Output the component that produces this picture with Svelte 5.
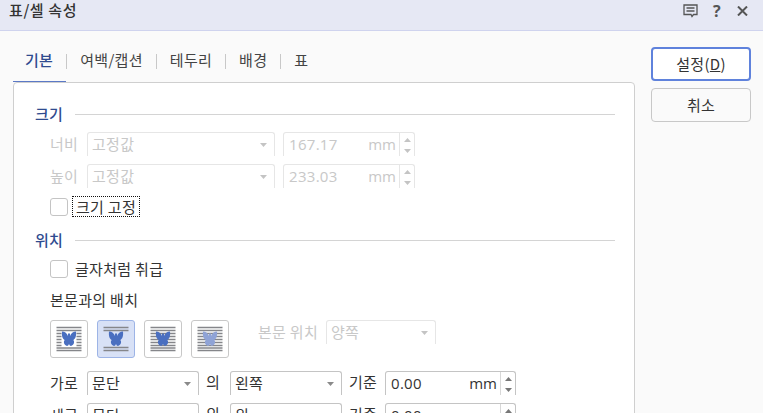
<script>
  const tabs = ['여백/캡션', '테두리', '배경', '표'];
  const wraps = [
    { kind: 'side', fill: '#4a6fc0' },
    { kind: 'topbottom', fill: '#4a6fc0', on: true },
    { kind: 'over', fill: '#4a6fc0' },
    { kind: 'behind', fill: '#8fa3d6' }
  ];
  const linesFor = (k) => {
    if (k === 'topbottom') return [{ y: 4.5, x: 3.5, w: 25 }, { y: 7.5, x: 3.5, w: 25 }, { y: 24.5, x: 3.5, w: 25 }, { y: 27.5, x: 3.5, w: 25 }];
    const ys = [4.5, 7.5, 10.5, 13.5, 16.5, 19.5, 22.5, 25, 27.5];
    if (k === 'side') return ys.map((y, i) => (i < 2 || i > 6) ? [{ y, x: 3.5, w: 25 }] : [{ y, x: 3.5, w: 5 }, { y, x: 23.5, w: 5 }]).flat();
    return ys.map((y) => ({ y, x: 3.5, w: 25 }));
  };
  const wing = 'M6 8.5 C9 8.5 11 10.5 12 13 L12 10.5 L14 10.5 L14 13 C15 10.5 17 8.5 20 8.5 C20.5 12.5 19.5 16 17.3 17 C19 18.8 17.8 22.3 15 23 C14 23 13.5 22 13 21 C12.5 22 12 23 11 23 C8.2 22.3 7 18.8 8.7 17 C6.5 16 5.5 12.5 6 8.5 Z';
</script>

{#snippet select(text, cls = '')}
  <div class="field select {cls}">
    <span class="val">{text}</span>
    <svg class="caret" width="7" height="4" viewBox="0 0 7 4"><path d="M0 0H7L3.5 4Z" /></svg>
  </div>
{/snippet}

{#snippet spin(text, cls = '')}
  <div class="field spin {cls}">
    <span class="num">{text}</span>
    <span class="unit">mm</span>
    <div class="arrows">
      <svg width="7" height="4" viewBox="0 0 7 4"><path d="M0 4H7L3.5 0Z" /></svg>
      <svg width="7" height="4" viewBox="0 0 7 4"><path d="M0 0H7L3.5 4Z" /></svg>
    </div>
  </div>
{/snippet}

<div class="dialog">
  <header class="titlebar">
    <span class="title">표/셀 속성</span>
    <div class="winbtns">
      <svg width="15" height="14" viewBox="0 0 15 14" fill="none" stroke="#555" stroke-width="1.3">
        <path d="M1 1H14V10.5H10.5L9 12.5L8 10.5H1Z" />
        <path d="M3.5 4H11.5M3.5 7H11.5" />
      </svg>
      <span class="q">?</span>
      <svg width="11" height="10" viewBox="0 0 11 10" fill="none" stroke="#555" stroke-width="2">
        <path d="M1 .5L10 9.500M10 .5L1 9.500" />
      </svg>
    </div>
  </header>

  <div class="content">
    <main class="left">
      <nav class="tabs">
        <span class="tab active">기본</span>
        {#each tabs as t}
          <i class="sep"></i>
          <span class="tab">{t}</span>
        {/each}
      </nav>

      <section class="panel">
        <div class="group"><span>크기</span><hr /></div>

        <div class="row r1 dim">
          <span class="lab">너비</span>
          {@render select('고정값', 'w188')}
          {@render spin('167.17', 'w132')}
        </div>
        <div class="row r2 dim">
          <span class="lab">높이</span>
          {@render select('고정값', 'w188')}
          {@render spin('233.03', 'w132')}
        </div>
        <div class="check c1"><i class="box"></i><span class="focus">크기 고정</span></div>

        <div class="group g2"><span>위치</span><hr /></div>
        <div class="check c2"><i class="box"></i><span class="plain">글자처럼 취급</span></div>
        <div class="sub">본문과의 배치</div>

        <div class="wraps">
          {#each wraps as w}
            <div class="wrapbtn" class:on={w.on}>
              <svg width="32" height="32" viewBox="0 0 32 32">
                {#each linesFor(w.kind) as l}
                  <rect x={l.x} y={l.y - 0.75} width={l.w} height="1.5" fill="#85868a" />
                {/each}
                <path d={wing} transform="translate(3 0)" fill={w.fill} />
              </svg>
            </div>
          {/each}
          <div class="pos dim">
            <span class="poslab">본문 위치</span>
            {@render select('양쪽', 'w110')}
          </div>
        </div>

        <div class="row r3">
          <span class="lab">가로</span>
          {@render select('문단', 'w112')}
          <span class="of">의</span>
          {@render select('왼쪽', 'w112')}
          <span class="base">기준</span>
          {@render spin('0.00', 'w131')}
        </div>
        <div class="row r4">
          <span class="lab">세로</span>
          {@render select('문단', 'w112')}
          <span class="of">의</span>
          {@render select('위', 'w112')}
          <span class="base">기준</span>
          {@render spin('0.00', 'w131')}
        </div>
      </section>
    </main>

    <aside class="actions">
      <button class="btn primary">설정(<u>D</u>)</button>
      <button class="btn">취소</button>
    </aside>
  </div>
</div>

<style>
  :global(body) { margin: 0; background: #fafafa; }
  .dialog {
    width: 763px; height: 413px; overflow: hidden; background: #fafafa;
    font-family: "Noto Sans CJK KR", "Open Sans", sans-serif;
    font-size: 15px; color: #333; line-height: 20px; letter-spacing: 0.3px;
  }
  .titlebar {
    height: 31px; box-sizing: border-box; background: #e6e8f4; border-bottom: 1px solid #cfd3ee;
    display: flex; align-items: center; justify-content: space-between; padding: 0 15px 8px 9px;
  }
  .title { font-size: 15px; font-weight: 500; letter-spacing: 0.6px; color: #333; position: relative; top: -1px; }
  .winbtns { display: flex; align-items: center; gap: 15px; }
  .q { font: bold 16px/16px "Open Sans", sans-serif; color: #555; width: 9px; }

  .content { display: flex; padding-left: 13px; gap: 16px; }
  .left { width: 622px; flex: none; }
  .tabs { height: 51px; box-sizing: border-box; display: flex; align-items: center; padding: 9px 0 0 12px; }
  .tab { color: #444; position: relative; top: -1px; }
  .tab.active { color: #2f4b8f; font-weight: 500; }
  .tab.active::after {
    content: ''; position: absolute; left: -12px; right: -13px; top: 31px; height: 1px; background: #5b79c6;
  }
  .sep { width: 1px; height: 15px; background: #c8c8c8; margin: 0 13px; }

  .panel {
    height: 340px; box-sizing: border-box; background: #fff; border: 1px solid #cfcfcf; border-radius: 4px 4px 0 0;
    padding: 21px 19px 0 21px;
  }
  .group { display: flex; align-items: center; gap: 12px; height: 20px; color: #2f4b8f; font-weight: 500; }
  .group hr { flex: 1; border: 0; height: 1px; background: #d4d4d4; margin: 0; }
  .g2 { margin-top: 13px; }

  .row { display: flex; align-items: flex-start; padding-left: 15px; height: 24px; }
  .r1 { margin-top: 8px; }
  .r2 { margin-top: 8px; }
  .r3 { margin-top: 13px; }
  .r4 { margin-top: 8px; }
  .lab { width: 37px; flex: none; line-height: 23px; }
  .of { width: 31px; flex: none; padding-left: 7px; box-sizing: border-box; line-height: 22px; }
  .base { width: 43px; flex: none; padding-left: 7px; box-sizing: border-box; line-height: 22px; }

  .field {
    height: 24px; box-sizing: border-box; flex: none; display: flex; align-items: center;
    border: 1px solid #c4c4c4; border-bottom: 0; border-radius: 3px 3px 0 0; background: #fff; color: #333;
  }
  .w188 { width: 188px; margin-right: 8px; }
  .w132 { width: 132px; }
  .w131 { width: 131px; }
  .w112 { width: 112px; }
  .w110 { width: 110px; }
  .select { padding: 0 7px 0 4px; justify-content: space-between; }
  .val { position: relative; top: -1px; }
  .caret { fill: #8a8a8a; }
  .spin { padding-left: 5px; }
  .num { flex: 1; font-family: "Open Sans", sans-serif; font-size: 15px; position: relative; top: -1px; }
  .unit { font-family: "Open Sans", sans-serif; font-size: 15px; margin-right: 3px; letter-spacing: 0; position: relative; top: -1px; }
  .arrows {
    width: 15px; height: 23px; border-left: 1px solid #d8d8d8; box-sizing: border-box;
    display: flex; flex-direction: column; justify-content: space-between; align-items: center; padding: 5px 0 3px;
  }
  .arrows svg { fill: #777; }

  .dim, .dim .field { color: #c8c8c8; }
  .dim .field { border-color: #e6e6e6; background: #fff; }
  .dim .caret, .dim .arrows svg { fill: #c4c4c4; }
  .dim .arrows { border-color: #e6e6e6; }

  .check { display: flex; align-items: center; gap: 7px; padding-left: 15px; }
  .c1 { margin-top: 8px; height: 21px; }
  .c2 { margin-top: 10px; height: 18px; }
  .box { width: 18px; height: 18px; box-sizing: border-box; border: 1px solid #c4c4c4; border-radius: 3px; background: #fff; flex: none; }
  .focus { border: 1px dotted #111; padding: 0 3px; height: 21px; box-sizing: border-box; line-height: 19px; margin-left: -3px; color: #333; }
  .plain { color: #333; }
  .sub { padding-left: 15px; margin-top: 12px; height: 20px; }

  .wraps { display: flex; align-items: flex-start; gap: 9px; padding-left: 15px; margin-top: 10px; height: 38px; }
  .wrapbtn {
    width: 38px; height: 38px; box-sizing: border-box; border: 1px solid #c8c8c8; border-radius: 3px; background: #fff;
    display: flex; align-items: center; justify-content: center;
  }
  .wrapbtn.on { background: #d8e1f6; border-color: #9db4e6; }
  .pos { display: flex; gap: 8px; margin-left: 20px; }
  .poslab { line-height: 24px; width: 60px; white-space: nowrap; }

  .actions { display: flex; flex-direction: column; gap: 7px; padding-top: 16px; }
  .btn {
    width: 100px; height: 34px; box-sizing: border-box; border: 1px solid #c8c8c8; border-radius: 4px; background: #fafafa;
    font: inherit; letter-spacing: 0.3px; color: #333; padding: 0;
  }
  .btn.primary { border: 2px solid #5f82dc; background: #fff; }
</style>
